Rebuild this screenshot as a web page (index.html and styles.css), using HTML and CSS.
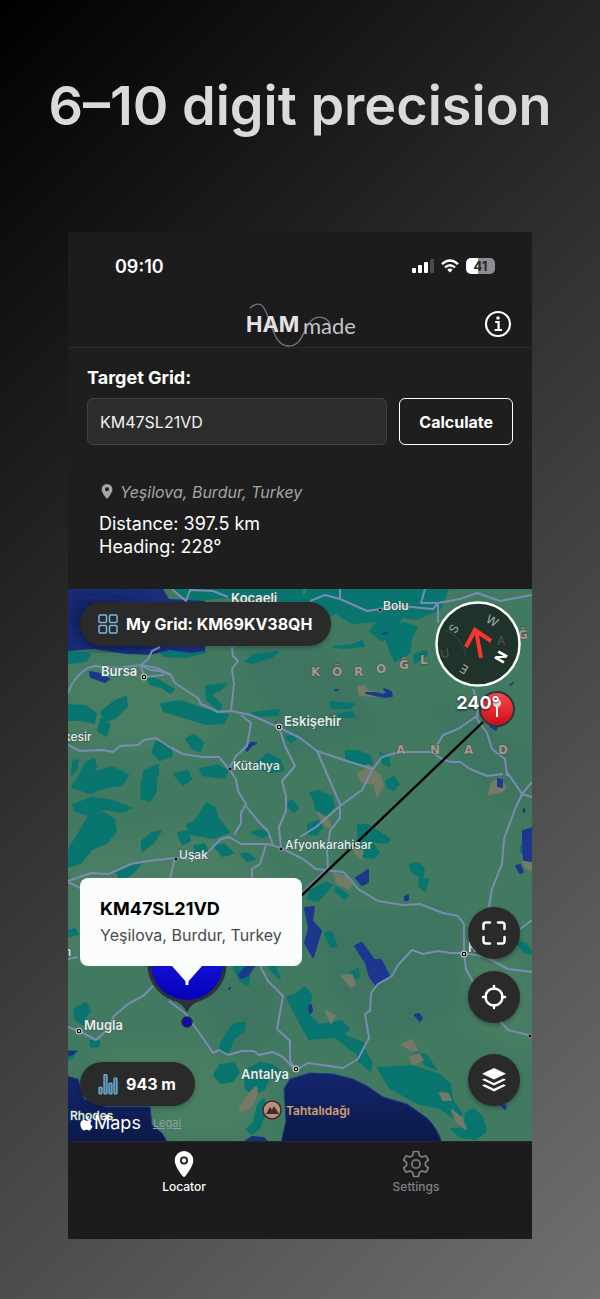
FILE: index.html
```html
<!DOCTYPE html>
<html lang="en">
<head>
    <meta charset="UTF-8">
    <meta name="viewport" content="width=device-width, initial-scale=1.0">
    <title>HAMmade - Grid Locator</title>
    <link rel="stylesheet" href="styles.css">
</head>
<body>
    <h1 class="headline">6–10 digit precision</h1>

    <main class="phone">
        <header class="top">
            <div class="status-bar">
                <span class="clock">09:10</span>
                <div class="status-icons">
                    <svg width="22" height="14" viewBox="0 0 22 14" aria-hidden="true">
                        <g fill="#fff">
                            <rect x="0" y="9" width="4" height="5" rx="1"/>
                            <rect x="6" y="6" width="4" height="8" rx="1"/>
                            <rect x="12" y="3" width="4" height="11" rx="1"/>
                        </g>
                        <rect x="18" y="0" width="4" height="14" rx="1" fill="#4b4b4d"/>
                    </svg>
                    <svg width="18" height="14" viewBox="0 0 18 14" fill="none" stroke="#fff" stroke-width="2.4" aria-hidden="true">
                        <path d="M1 5.2Q9-2 17 5.2"/>
                        <path d="M4 8.4Q9 4 14 8.4"/>
                        <path d="M6.3 10.7Q9 8.5 11.7 10.7L9 13.6z" fill="#fff" stroke="none"/>
                    </svg>
                    <span class="battery">41</span>
                </div>
            </div>
            <div class="title-bar">
                <svg class="logo" width="114" height="48" viewBox="0 0 114 48" role="img" aria-label="HAMmade">
                    <path d="M7 8C17 0 21 5 25 17C32 38 36 46 46 46C60 46 60 28 69 20C75 15 84 17 87 24" fill="none" stroke="#77777a" stroke-width="1.3"/>
                    <text class="logo-bold" x="3" y="32">HAM</text>
                    <text class="logo-light" x="60" y="34">made</text>
                </svg>
                <button class="info-button" type="button" aria-label="Info">
                    <svg width="28" height="28" viewBox="0 0 28 28" fill="none" stroke="#fff" stroke-width="2.2">
                        <circle cx="14" cy="14" r="12"/>
                        <path d="M11.2 12h3.4v7.4M10.6 20h7.4"/>
                        <circle cx="14" cy="8" r="1.8" fill="#fff" stroke="none"/>
                    </svg>
                </button>
            </div>
        </header>

        <section class="target">
            <label class="target-label" for="grid">Target Grid:</label>
            <form class="target-form">
                <input class="grid-input" id="grid" type="text" value="KM47SL21VD">
                <button class="calculate" type="button">Calculate</button>
            </form>
            <div class="result">
                <p class="place">
                    <svg width="16" height="18" viewBox="0 0 16 18" aria-hidden="true">
                        <path fill="#a5a5a5" fill-rule="evenodd" d="M8 0a5.400 5.400 0 0 0-5.400 5.400C2.600 9 8 15 8 15s5.400-6 5.400-9.600A5.400 5.400 0 0 0 8 0zm0 3.300a2 2 0 1 1 0 4 2 2 0 0 1 0-4z"/>
                    </svg>
                    <em>Yeşilova, Burdur, Turkey</em>
                </p>
                <p>Distance: 397.5 km</p>
                <p>Heading: 228°</p>
            </div>
        </section>

        <section class="map">
            <svg class="map-canvas" viewBox="0 0 464 552" preserveAspectRatio="xMidYMid slice">
                <defs>
                    <linearGradient id="sea" x1="0" y1="0" x2="0" y2="1">
                        <stop offset="0" stop-color="#14256f"/>
                        <stop offset="1" stop-color="#0b1946"/>
                    </linearGradient>
                    <linearGradient id="redPin" x1="0" y1="0" x2="0" y2="1">
                        <stop offset="0" stop-color="#ff4a50"/>
                        <stop offset="1" stop-color="#c80d14"/>
                    </linearGradient>
                    <linearGradient id="bluePin" x1="0" y1="0" x2="0" y2="1">
                        <stop offset="0" stop-color="#2420f0"/>
                        <stop offset="1" stop-color="#0400b8"/>
                    </linearGradient>
                    <filter id="soft"><feGaussianBlur stdDeviation="9"/></filter>
                </defs>

                <rect width="464" height="552" fill="#427a61"/>
                <g filter="url(#soft)">
                    <path fill="#4a7e63" d="M0 70l90 0 60 60-50 40-100-20zM0 260l150-20 60 60-80 60-130 0zM30 460l110 0 60 40-20 50-80 0zM400 330l64 60 0 80-60-40z"/>
                    <path fill="#3d7560" d="M170 60l90 0 60 80-100 30zM250 320l140 0 0 100-80 40-50-60zM350 100l114 60 0 80-60-40zM130 390l70 0 10 60-50 20z"/>
                </g>

                <!-- forests -->
                <g class="forest">
                    <path d="M240 0l140 0-8 20-24 10-14-2-8 14-12 10-12-10 8-10-26 2-16-10-30 10-8-12z"/>
                    <path d="M315 42l20-8 14 4-6 12-2 14-14 8-6-14z"/>
                    <path d="M104 0l60 0 70 0 0 18-30-8-50-2-30 4z"/>
                    <path d="M0 63l22 2-4 7-18 2z"/>
                    <path d="M93 64l20-4 25 3-20 5-22-1z"/>
                    <path d="M178 72l8-6 24-3-6 5-20 6z"/>
                    <path d="M0 116l18 1 10 8-2 9-12-3-14 0z"/>
                    <path d="M33 123l14-11 11-4 1 9-12 12-10 3z"/>
                    <path d="M33 130l9 5-4 12-8-5z"/>
                    <path d="M80 89l10 2 16 9-4 4-8-6-12-3z"/>
                    <path d="M93 115l20-3 22 8 25 6-4 8-18 1-26-8-16-5z"/>
                    <path d="M138 97l20-2-6 6-10 4 12 12-3 4-12-10z"/>
                    <path d="M184 124l27-3-2 5-22 1z"/>
                    <path d="M118 150l8-4 9 7-3 9-8-3z"/>
                    <path d="M88 153l14 4 2 10-12 4-8-8z"/>
                    <path d="M188 174l12-9 12 6 4 10-12 2-14-3z"/>
                    <path d="M132 180l18-4 10 6-4 7-22-3z"/>
                    <path d="M5 173l5-2-2 10-4 4z"/>
                    <path d="M18 174l8-4 2 8-4 6 20-6 16 8-6 10-16 2-16 6-18-6 8-12z"/>
                    <path d="M76 182l14-6 0 10-8 12-2 12-6-8z"/>
                    <path d="M106 185l14-3 3 8-8 6z"/>
                    <path d="M5 216l18-7 18 2 22 8-10 4-16-3-16 6-14-4z"/>
                    <path d="M20 228l16-4 10 6 2 12-10 12-14 6-12 14-12 4 2-20 8-12z"/>
                    <path d="M74 192l14 0 0 10-6 10-9-3z"/>
                    <path d="M119 236l8-4 12-18 8 5 2 9 12 15-16 6-22-4z"/>
                    <path d="M110 244l10-2 2 10-8 3z"/>
                    <path d="M74 252l10-8 9-2-8 12-11 8z"/>
                    <path d="M126 257l10-2 4 7-12 1z"/>
                    <path d="M146 257l10-2 9 9-10 3z"/>
                    <path d="M173 265l6-1 8 6-8 2z"/>
                    <path d="M184 244l8-3 9 4-7 3z"/>
                    <path d="M48 283l14-7 11-2-8 10-12 6z"/>
                    <path d="M218 216l6-5 6 8-4 4z"/>
                    <path d="M218 149l8-4 3 4-6 4z"/>
                    <path d="M0 342l7-2 3 5-10 2z"/>
                    <path d="M242 204l8-2 14 6 2 10-8 8-10-6-2-10z"/>
                    <path d="M240 236l10-4 4 6-6 8-8-2z"/>
                    <path d="M318 192l8-4 5 7-5 6-6-3z"/>
                    <path d="M290 236l10 0 22 14-3 4-16-2 8 12-6 5-14-2z"/>
                    <path d="M342 275l8-1 6 6-2 10 6 0-3 12-6-5 1-9-9-6z"/>
                    <path d="M242 302l16-8 6 2-14 16-10-2z"/>
                    <path d="M268 298l12 8-3 4-10-8z"/>
                    <path d="M278 162l12 0 12 5 2 8-14 0-12-6z"/>
                    <path d="M262 113l24 2-4 4-18 0z"/>
                    <path d="M270 126l14-3 2 5-14 0z"/>
                    <path d="M266 58l18-2 10-4 2 5-20 2z"/>
                    <path d="M346 66l12-4 1 4-12 8z"/>
                    <path d="M312 164l8 4 2 9-7-3z"/>
                    <path d="M257 344l6-1 6 14-6 1z"/>
                    <path d="M448 352l10 3 6 10-8-2z"/>
                    <path d="M6 420l12-6 4 8-6 8 0 6-9-6z"/>
                    <path d="M22 452l9 0 0 5-8 1z"/>
                    <path d="M0 462l9 0-6 7-3 2z"/>
                    <path d="M162 440l6-6 9 0-2 9-9 6-6 14-9-2 4-10z"/>
                    <path d="M146 486l6-10 14-2 5 9-6 9-12 2z"/>
                    <path d="M176 482l16-8 12 2 14 10-4 4-12-4-6 14-10 6-8-6z"/>
                    <path d="M190 516l6-6 2 12-7 18-8 5-4-5 7-6z"/>
                    <path d="M166 378l12-4 4 8-2 14-8-5z"/>
                    <path d="M198 368l8 6 6 16-10-10z"/>
                    <path d="M219 408l8-2 10-8 6 8-2 20 10 10 22-4 8 8-6 6 20 8 4 14-14-6-18-14-26 2-10-18z"/>
                    <path d="M288 456l6 4 9 12 0 10-12-10z"/>
                    <path d="M310 479l34-2 26 8 12 10 2 16 10 14-8 4-14-10-20-4-30-16z"/>
                    <path d="M348 464l10 2 10 14-10-4z"/>
                    <path d="M282 384l8-4 1 8-6 2z"/>
                    <path d="M398 524l8-4 8 8 4 14-10 8-16-2-8-8 12 0z"/>
                    <path d="M452 258l6-4 0 10-5-1z"/>
                </g>

                <!-- bare ground -->
                <g class="bare">
                    <path d="M290 98l6-1 4 5 8 2-2 3-14-1z"/>
                    <path d="M290 184l8-3 2-5 6 6 6 4 3 10-6 11-3-12-12-2z"/>
                    <path d="M250 224l10 7 3 8-6-3z"/>
                    <path d="M286 260l9 2-2 7-5-4z"/>
                    <path d="M266 284l12 4 6 8-3 4-12-6z"/>
                    <path d="M424 194l8-5 6 10-5 4-12 2z"/>
                    <path d="M455 273l9 0 0 8-6-2z"/>
                    <path d="M274 387l10-1 3 10-4 2z"/>
                    <path d="M258 422l9 5-4 7z"/>
                    <path d="M334 456l10-5 5 10-6 0z"/>
                    <path d="M342 469l9-4 4 6-10 4z"/>
                    <path d="M372 504l8 1 3 6-8 0z"/>
                    <path d="M384 521l9 8 5 11-10-8z"/>
                    <path d="M182 504l6-6 1 6-6 14-10 5-1-5z"/>
                </g>

                <!-- seas and lakes -->
                <path fill="#1b2f7c" d="M0 0l95 0 6 10 36 2 0 50-15 2-20-3-20 5-24-1-32-5-26 2z"/>
                <path fill="#0f1c58" opacity=".8" filter="url(#soft)" d="M0 5l70 6 20 45-50 2-40-8z"/>
                <path fill="url(#sea)" stroke="#1c3b86" d="M213 554l5-22-2-32 6-10 20-6 23 1 20 5 14 7 16 11 24 7 20 14q11 11 15 25z"/>
                <path fill="url(#sea)" stroke="#1c3b86" d="M-2 487l12 3 6 20 22 8 44 0 2 18 10 8 6 10-102 0z"/>
                <path fill="#19307c" d="M0 462l9 0-4 4-5 1zM176 552l8-5 12 1 4 4z"/>
                <g class="lake">
                    <path d="M22 83l10 2 9 5-4 3-14-5z"/>
                    <path d="M178 159l5-5 5 0-5 3-4 5z"/>
                    <path d="M237 319l9-1-2 14 9 10-8 26-8-14 4-15z"/>
                    <path d="M287 357l7-3 12 17 7 0 8 16-13 9-6-8-4-14z"/>
                    <path d="M288 289l12-8 0 12-6 3z"/>
                    <path d="M298 104l9 0 8 2 5-2-4-4 7 3 1 4-7 1z"/>
                    <path d="M337 308l3-2 0 5-3 0z"/>
                    <path d="M455 242l10-3 0 33-9-1-1-14z"/>
                    <path d="M448 277l4-1 3 7-3 1z"/>
                    <path d="M430 190l4 1 0 7-4-1z"/>
                    <path d="M171 386l8-9 8-1-7 10-7 3z"/>
                    <path d="M315 45l4-1M267 101l3 0M456 220l0 3M442 96l3-2M161 400l1-1"/>
                    <path d="M347 426l4-1 3 4-2 3z"/>
                    <path d="M241 417l2-1 1 6-2 2z"/>
                    <path d="M433 516l5 1-1 3z"/>
                    <path d="M422 137l7 0-1 4z"/>
                </g>

                <!-- roads -->
                <g class="road">
                    <path d="M0 104l4-9 6-8 8-7 8-3 24 2 23-3 9 5 10 1 11 4 4 8 12 8 11 7 3 6 17 8 13-1 20 4 27 12 22 11 17 13 30 10 26 8 9-12 18-5 32 0 8 6 10 4 10 0 10 7 17 7 16-2"/>
                    <path d="M92 58l-8 4-4 8-7 6 3 12 20-2M73 76l16 3 14 7M104 0l14 12 4-11 23 1 15 6"/>
                    <path d="M242 12l15-6 15 4 27 12 33-5 33 3 5-6 22-4 17-6 23 8 32-6M272 0v10M357 0l-4 14 17 0 0 20"/>
                    <path d="M164 58l1 9 5 5-6 8 2 15-3 27"/>
                    <path d="M0 156l12 6 23-1 10 2 7-6 18-1 6-5 12-2 12 8 15 8 20 3 16 0 10 12 7 10 2 12 8 13-5 9 0 10-7 12M178 217l12 15 10 10 5 14"/>
                    <path d="M173 126l10 8-4 23-11 10-6 11M211 138l6 19 10 20-13 15 4 15 0 15-7 16 2 21"/>
                    <path d="M249 162l13 30 10 23 0 14-10 13-3 20 1 17-28 27M305 179l-11 22-22 16-24 21-16 10"/>
                    <path d="M0 292l23-8 17 1 10-4 13-6 17-3 27-3 26 1 8-8 12-12 8-2 12 7 27 0 13 4 22 11 13 10 27 3 8 8 7 9 20 12 25 4 17-1 23 9 15 3 6 8 0 29"/>
                    <path d="M107 269l-6 24M198 256l-6 19-8 5 0 13M0 293l12 6"/>
                    <path d="M464 383l-24-3-22-12-22-4-13 0-13-2-15 3-11-4-14 15-6 11-14 8-7 9-1 18-5 3 4 24-11 21-15 9-35-5-12 7"/>
                    <path d="M396 364l2 16 7 13 25 37 10 11 24 6M421 318l3-18 10-25 2-25 11-30 7-15-15-22M464 208l-10-3 10-12M464 331l-12 9"/>
                    <path d="M405 100l5 14-1 16 10 14 5 16 13 10 2 17M409 127l-19 13-15 6-7 12"/>
                    <path d="M0 438l11 4 17 9 12-11 6-13 14-12 15-8 10-10M101 412l17 13 9 13 10 14 8 12 6-3 9 5 14-4 12 0 5 4 14-3 10 5 13 14M193 365l0 14 7 13 15 15-6 33 13 12 0 20 6 8"/>
                    <path d="M0 370l10-2"/>
                </g>

                <path d="M167 370L415 133" fill="none" stroke="#000" stroke-width="2.400"/>

                <!-- city dots -->
                <g fill="#111" stroke="#dfe6e6" stroke-width="1">
                    <circle cx="76" cy="88" r="3"/><circle cx="211" cy="138" r="3"/>
                    <circle cx="396" cy="365" r="3"/><circle cx="11" cy="442" r="3"/>
                    <circle cx="228" cy="480" r="3"/>
                </g>
                <g fill="#fff">
                    <circle cx="76" cy="88" r="1"/><circle cx="211" cy="138" r="1"/>
                    <circle cx="396" cy="365" r="1"/><circle cx="11" cy="442" r="1"/>
                    <circle cx="228" cy="480" r="1"/>
                </g>
                <g fill="#111" stroke="#8c96a8" stroke-width="1">
                    <circle cx="162" cy="180" r="2"/><circle cx="108" cy="270" r="2"/>
                    <circle cx="213" cy="260" r="2"/><circle cx="312" cy="21" r="2"/>
                    <circle cx="462" cy="447" r="2"/>
                </g>

                <g class="city">
                    <text x="163" y="14">Kocaeli</text>
                    <text x="33" y="87">Bursa</text>
                    <text x="216" y="137">Eskişehir</text>
                    <text x="400" y="363">K</text>
                    <text x="16" y="441">Mugla</text>
                    <text x="173" y="490">Antalya</text>
                </g>
                <g class="city town">
                    <text x="315" y="21">Bolu</text>
                    <text x="-4" y="152">kesir</text>
                    <text x="165" y="181">Kütahya</text>
                    <text x="111" y="270">Uşak</text>
                    <text x="217" y="260">Afyonkarahisar</text>
                    <text x="-4" y="367">n</text>
                    <text x="2" y="531">Rhodes</text>
                </g>

                <g class="region">
                    <text x="243 264 286 308" y="87 87 87 84">KÖRO</text>
                    <text x="331 352" y="80 75">ĞL</text>
                    <text x="450" y="50">Ğ</text>
                    <text x="328 362 396 430" y="165">ANAD</text>
                </g>

                <circle cx="204" cy="521" r="9" fill="#b98f7c" stroke="#3c2b2b" stroke-width="1.500"/>
                <path d="M198 525l4-7 2 3 2-4 5 8z" fill="#3c2b2b"/>
                <text class="peak" x="218" y="526">Tahtalıdağı</text>

                <!-- start marker -->
                <circle cx="429" cy="120" r="17" fill="url(#redPin)" stroke="#30353e" stroke-width="2"/>
                <path d="M429 116v12" stroke="#fff" stroke-width="2"/>
                <circle cx="429" cy="114" r="4" fill="#f4dcdc"/>

                <!-- target marker -->
                <path d="M119 336a39 39 0 0 1 13 76q-9 2-13 12-4-10-13-12a39 39 0 0 1 13-76z" fill="#2b303c"/>
                <circle cx="119" cy="375" r="36" fill="url(#bluePin)"/>
                <path d="M119 380v16" stroke="#fff" stroke-width="3"/>
                <circle cx="119" cy="433" r="5" fill="#0b0bb0" stroke="#1d2747" stroke-width="1.500"/>
            </svg>

            <div class="pill my-grid">
                <svg width="20" height="20" viewBox="0 0 20 20" fill="none" stroke="#7db8dc" stroke-width="1.500" aria-hidden="true">
                    <rect x="1" y="1" width="7.500" height="7.500" rx="1"/>
                    <rect x="11.500" y="1" width="7.500" height="7.500" rx="1"/>
                    <rect x="1" y="11.500" width="7.500" height="7.500" rx="1"/>
                    <rect x="11.500" y="11.500" width="7.500" height="7.500" rx="1"/>
                </svg>
                <span>My Grid: KM69KV38QH</span>
            </div>

            <div class="compass">
                <svg width="86" height="86" viewBox="-43 -43 86 86">
                    <circle r="41.500" fill="#1c2d27" fill-opacity=".92" stroke="#fff" stroke-width="2.500"/>
                    <path d="M-34-14q18 5 22 26" fill="none" stroke="#3a4947" stroke-width="1"/>
                    <g class="compass-ghost">
                        <text x="-37" y="14" transform="rotate(-8 -37 14)">U</text>
                        <text x="19" y="1">A</text>
                    </g>
                    <g class="compass-letters">
                        <text class="north" transform="translate(23 13) rotate(120)" dy="5">N</text>
                        <text transform="translate(-14 25) rotate(210)" dy="4">E</text>
                        <text transform="translate(-24 -15) rotate(300)" dy="4">S</text>
                        <text transform="translate(14 -23) rotate(30)" dy="4">W</text>
                    </g>
                    <path d="M3 14L-2-14M-12 3L-3-14 13-3" fill="none" stroke="#fa372d" stroke-width="4"/>
                </svg>
                <span class="bearing">240°</span>
            </div>

            <div class="callout">
                <strong>KM47SL21VD</strong>
                <span>Yeşilova, Burdur, Turkey</span>
            </div>

            <div class="map-tools">
                <button type="button" aria-label="Fit to screen">
                    <svg width="28" height="28" viewBox="0 0 28 28" fill="none" stroke="#fff" stroke-width="2.500" stroke-linecap="round">
                        <path d="M10 3.500H6A2.500 2.500 0 0 0 3.500 6v4M18 3.500h4A2.500 2.500 0 0 1 24.500 6v4M10 24.500H6A2.500 2.500 0 0 1 3.500 22v-4M18 24.500h4a2.500 2.500 0 0 0 2.500-2.500v-4"/>
                    </svg>
                </button>
                <button type="button" aria-label="My location">
                    <svg width="28" height="28" viewBox="0 0 28 28" fill="none" stroke="#fff" stroke-width="2.500" stroke-linecap="round">
                        <circle cx="14" cy="14" r="8.500"/>
                        <path d="M14 3v3M14 22v3M3 14h3M22 14h3"/>
                    </svg>
                </button>
                <button class="layers" type="button" aria-label="Map layers">
                    <svg width="28" height="28" viewBox="0 0 28 28" fill="#fff">
                        <path d="M14 2l12 5.800-12 5.800L2 7.800z"/>
                        <path d="M4.500 12.500L2 13.800l12 5.600 12-5.600-2.500-1.300L14 17z"/>
                        <path d="M4.500 18.300L2 19.600l12 5.800 12-5.800-2.500-1.300L14 22.800z"/>
                    </svg>
                </button>
            </div>

            <div class="map-footer">
                <div class="pill">
                    <svg width="20" height="22" viewBox="0 0 20 22" fill="#3d6f8e" stroke="#7db8dc" stroke-width="1.200" aria-hidden="true">
                        <rect x="1" y="14" width="3" height="7" rx="1"/>
                        <rect x="6" y="1.500" width="3" height="19.500" rx="1"/>
                        <rect x="11" y="10" width="3" height="11" rx="1"/>
                        <rect x="16" y="5" width="3" height="16" rx="1"/>
                    </svg>
                    <span>943 m</span>
                </div>
                <div class="attribution">
                    <span class="maps-brand">
                        <svg width="13" height="15" viewBox="0 0 13 15" fill="#fff" aria-hidden="true">
                            <path d="M9 0c.1 1.700-1.200 3.300-2.800 3.300C6 1.700 7.500.2 9 0zM11.900 5.100c-2 1.300-1.700 4.200.6 5.100-.6 1.900-1.900 4.200-3.400 4.200-1 0-1.300-.6-2.500-.6s-1.600.6-2.500.6C2.200 14.400.3 11 .3 8.300c0-2.800 1.800-4.300 3.500-4.300 1.100 0 2 .7 2.700.7.700 0 1.700-.8 3-.8 1 0 1.900.5 2.400 1.200z"/>
                        </svg>
                        Maps
                    </span>
                    <a href="#legal">Legal</a>
                </div>
            </div>
        </section>

        <nav class="tabs">
            <a class="tab active" href="#locator">
                <svg width="28" height="28" viewBox="0 0 28 28" fill="currentColor" aria-hidden="true">
                    <path fill-rule="evenodd" d="M14 1a9.300 9.300 0 0 0-9.300 9.300C4.700 16 10 22.500 12.700 26.200q1.300 1.600 2.600 0C18 22.500 23.300 16 23.300 10.300A9.300 9.300 0 0 0 14 1zm0 5.500a4 4 0 1 1 0 8 4 4 0 0 1 0-8z"/>
                    <circle cx="14" cy="10.500" r="2.200"/>
                </svg>
                Locator
            </a>
            <a class="tab" href="#settings">
                <svg width="28" height="28" viewBox="0 0 28 28" fill="none" stroke="currentColor" stroke-width="1.700" stroke-linejoin="round" aria-hidden="true">
                    <path d="M11.500 1.500h5l.8 3.900 2.800 1.600 3.900-1.200 2.400 4.200-3 2.600v2.800l3 2.600-2.400 4.200-3.900-1.200-2.800 1.600-.8 3.900h-5l-.8-3.900L7.900 21 4 22.200 1.600 18l3-2.600v-2.800l-3-2.600L4 5.800 7.900 7l2.800-1.600z"/>
                    <circle cx="14" cy="14" r="4.200"/>
                </svg>
                Settings
            </a>
        </nav>
    </main>
</body>
</html>
```
FILE: styles.css
```css
* {
    box-sizing: border-box;
}
body {
    margin: 0;
    min-height: 100vh;
    padding: 60px 68px;
    background: linear-gradient(135deg, #000 0%, #707070 100%);
    color: #fff;
    font-family: Inter, "Liberation Sans", sans-serif;
}
p {
    margin: 0;
}
button, input {
    font-family: inherit;
}
.headline {
    margin: 0 -60px 80px;
    color: #dadada;
    font-size: 54px;
    font-weight: 600;
    line-height: 92px;
    text-align: center;
    white-space: nowrap;
}
.phone {
    background-color: #1c1c1e;
}

/* header */
.top {
    border-bottom: 1px solid #2a2a2c;
}
.status-bar {
    display: flex;
    align-items: center;
    justify-content: space-between;
    height: 68px;
    padding: 0 37px 0 47px;
}
.clock {
    font-size: 18px;
    font-weight: 600;
}
.status-icons {
    display: flex;
    align-items: center;
    gap: 7px;
}
.battery {
    width: 29px;
    border-radius: 5px;
    background: linear-gradient(90deg, #fff 41%, #8e8e90 41%);
    color: #29292b;
    font-size: 13px;
    font-weight: 700;
    line-height: 16px;
    text-align: center;
}
.title-bar {
    display: grid;
    grid-template-columns: 1fr auto 1fr;
    align-items: center;
    height: 47px;
    padding: 0 20px;
}
.logo {
    grid-column: 2;
}
.logo-bold {
    fill: #e4e4e4;
    font-family: Inter, sans-serif;
    font-size: 22px;
    font-weight: 700;
}
.logo-light {
    fill: #c6c6c6;
    font-family: Lato, sans-serif;
    font-size: 22px;
}
.info-button {
    justify-self: end;
    display: flex;
    padding: 0;
    border: none;
    background: none;
    cursor: pointer;
}

/* target form */
.target {
    padding: 18px 19px 31px;
    background-color: #1e1e1e;
}
.target-label {
    display: block;
    margin-bottom: 8px;
    font-size: 18px;
    font-weight: 700;
    line-height: 24px;
}
.target-form {
    display: flex;
    gap: 12px;
}
.grid-input {
    flex: 1;
    min-width: 0;
    height: 47px;
    padding: 0 12px;
    border: 1px solid #434343;
    border-radius: 6px;
    background-color: #2c2c2c;
    color: #f2f2f2;
    font-size: 16px;
}
.calculate {
    padding: 0 19px;
    border: 1px solid #fff;
    border-radius: 6px;
    background: none;
    color: #fff;
    font-size: 16px;
    font-weight: 700;
    cursor: pointer;
}
.result {
    padding: 36px 12px 0;
    font-size: 18px;
    line-height: 23px;
}
.place {
    display: flex;
    align-items: center;
    gap: 5px;
    margin-bottom: 8px;
    color: #a5a5a5;
    font-size: 16px;
}

/* map */
.map {
    position: relative;
    overflow: hidden;
}
.map-canvas {
    display: block;
    width: 100%;
    height: auto;
}
.forest {
    fill: #08756f;
    stroke: #08756f;
    stroke-width: 2px;
    stroke-linejoin: round;
}
.bare {
    fill: #757a66;
    stroke: #757a66;
    stroke-width: 2px;
    stroke-linejoin: round;
}
.lake {
    fill: #1d378f;
    stroke: #1d378f;
    stroke-width: 2px;
    stroke-linejoin: round;
    stroke-linecap: round;
}
.road {
    fill: none;
    stroke: #7a8cb2;
    stroke-width: 2px;
    stroke-linejoin: round;
}
.city {
    fill: #e6eeec;
    stroke: #3a5a56;
    stroke-width: 1px;
    paint-order: stroke;
    font-size: 13px;
    font-weight: 600;
}
.town {
    font-size: 12px;
    font-weight: 500;
}
.region {
    fill: #ab948a;
    stroke: #36564d;
    stroke-width: 1px;
    paint-order: stroke;
    font-family: "DejaVu Sans", sans-serif;
    font-size: 12px;
    font-weight: 700;
}
.peak {
    fill: #c4a08c;
    stroke: #2a2430;
    stroke-width: 1px;
    paint-order: stroke;
    font-size: 12px;
    font-weight: 600;
}
.pill {
    display: flex;
    align-items: center;
    gap: 8px;
    height: 44px;
    padding: 0 19px 0 18px;
    border-radius: 22px;
    background-color: #2a2a2a;
    box-shadow: 0 2px 5px rgba(0, 0, 0, 0.25);
    font-size: 16px;
    font-weight: 700;
}
.my-grid {
    position: absolute;
    top: 13px;
    left: 12px;
}
.compass {
    position: absolute;
    top: 12px;
    right: 11px;
    display: flex;
    flex-direction: column;
    align-items: center;
}
.compass-letters {
    fill: #a3aba8;
    font-size: 12px;
    text-anchor: middle;
}
.compass-letters .north {
    fill: #fff;
    font-size: 14px;
    font-weight: 800;
}
.compass-ghost {
    fill: #5b514c;
    font-size: 12px;
}
.bearing {
    margin-top: 4px;
    font-size: 18px;
    font-weight: 700;
    line-height: 24px;
    text-shadow: 0 1px 3px rgba(0, 0, 0, 0.8);
}
.callout {
    position: absolute;
    top: 289px;
    left: 12px;
    display: flex;
    flex-direction: column;
    gap: 2px;
    padding: 19px 20px;
    border-radius: 8px;
    background-color: #fbfcfc;
    color: #000;
    line-height: 24px;
}
.callout::after {
    content: "";
    position: absolute;
    top: 100%;
    left: 92px;
    border: 15px solid transparent;
    border-top: 17px solid #fbfcfc;
    border-bottom: none;
}
.callout strong {
    font-size: 18px;
}
.callout span {
    color: #4a4a4a;
    font-size: 16px;
}
.map-tools {
    position: absolute;
    right: 12px;
    bottom: 35px;
    display: flex;
    flex-direction: column;
    gap: 12px;
}
.map-tools button {
    display: flex;
    align-items: center;
    justify-content: center;
    width: 52px;
    height: 52px;
    padding: 0;
    border: none;
    border-radius: 50%;
    background-color: #2a2a2a;
    box-shadow: 0 2px 4px rgba(0, 0, 0, 0.3);
    cursor: pointer;
}
.map-tools .layers {
    margin-top: 19px;
}
.map-footer {
    position: absolute;
    left: 12px;
    bottom: 7px;
    display: flex;
    flex-direction: column;
    align-items: flex-start;
    gap: 6px;
}
.attribution {
    display: flex;
    align-items: center;
    gap: 12px;
    line-height: 22px;
}
.maps-brand {
    display: flex;
    align-items: center;
    gap: 1px;
    font-size: 18px;
    font-weight: 400;
}
.attribution a {
    color: #8ba3a0;
    font-size: 11px;
}

/* bottom tabs */
.tabs {
    display: grid;
    grid-template-columns: 1fr 1fr;
    padding: 8px 0 44px;
    border-top: 1px solid #262629;
}
.tab {
    display: flex;
    flex-direction: column;
    align-items: center;
    gap: 1px;
    color: #808083;
    font-size: 12px;
    font-weight: 500;
    line-height: 16px;
    text-decoration: none;
}
.tab.active {
    color: #fff;
}
```
